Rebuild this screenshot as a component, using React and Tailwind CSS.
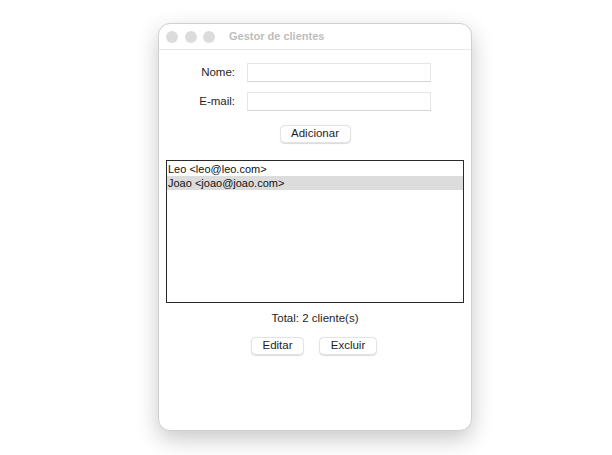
import React from 'react'

const FONT = { fontFamily: '"Liberation Sans", Arial, sans-serif' }

const BTN =
  'h-[18px] rounded-[5px] bg-white border border-[#e4e4e4] shadow-[0_0.5px_1px_rgba(0,0,0,0.15)] ' +
  'text-[11.5px] text-[#1e1e1e] flex items-center justify-center leading-none'

const CLIENTS = [
  { name: 'Leo', email: 'leo@leo.com' },
  { name: 'Joao', email: 'joao@joao.com' },
]

function Field({ label }) {
  return (
    <div className="flex items-center">
      <span className="w-[76px] text-right text-[11.5px] text-[#1e1e1e]">{label}</span>
      <div className="ml-[12px] w-[184px] h-[19px] bg-white border border-[#e6e6e6] border-b-[#d4d4d4]" />
    </div>
  )
}

export default function App() {
  const selected = 1
  return (
    <div className="w-[612px] h-[455px] bg-white pt-[23px] pl-[158px]" style={FONT}>
      <div className="w-[314px] h-[408px] rounded-[12px] bg-white border border-[#d0d0d0] shadow-[0_8px_22px_rgba(0,0,0,0.22)] overflow-hidden flex flex-col">
        {/* Title bar */}
        <div className="h-[26px] shrink-0 flex items-center border-b border-[#e8e8e8] pl-[7px]">
          <div className="flex gap-[6.5px]">
            <span className="w-[12px] h-[12px] rounded-full bg-[#dcdcdc]" />
            <span className="w-[12px] h-[12px] rounded-full bg-[#dcdcdc]" />
            <span className="w-[12px] h-[12px] rounded-full bg-[#dcdcdc]" />
          </div>
          <span className="ml-[14px] text-[11px] font-bold text-[#bdbdbd]">Gestor de clientes</span>
        </div>

        {/* Form */}
        <div className="pt-[13px] flex flex-col gap-[10px]">
          <Field label="Nome:" />
          <Field label="E-mail:" />
        </div>

        <div className="flex justify-center mt-[14px]">
          <button className={BTN + ' w-[71px]'}>Adicionar</button>
        </div>

        {/* List */}
        <div className="mt-[17px] ml-[7px] w-[298px] h-[143px] border border-[#2a2a2a] bg-white pt-[1px]">
          {CLIENTS.map((c, i) => (
            <div
              key={c.email}
              className={'h-[14px] pl-[1px] text-[11px] leading-[14px] text-[#111] ' + (i === selected ? 'bg-[#dcdcdc]' : '')}
            >
              {c.name} &lt;{c.email}&gt;
            </div>
          ))}
        </div>

        <div className="mt-[8px] text-center text-[11.5px] text-[#1e1e1e] leading-[14px]">
          Total: {CLIENTS.length} cliente(s)
        </div>

        <div className="flex justify-center gap-[15px] mt-[12px] pr-[2px]">
          <button className={BTN + ' w-[53px]'}>Editar</button>
          <button className={BTN + ' w-[58px]'}>Excluir</button>
        </div>
      </div>
    </div>
  )
}
